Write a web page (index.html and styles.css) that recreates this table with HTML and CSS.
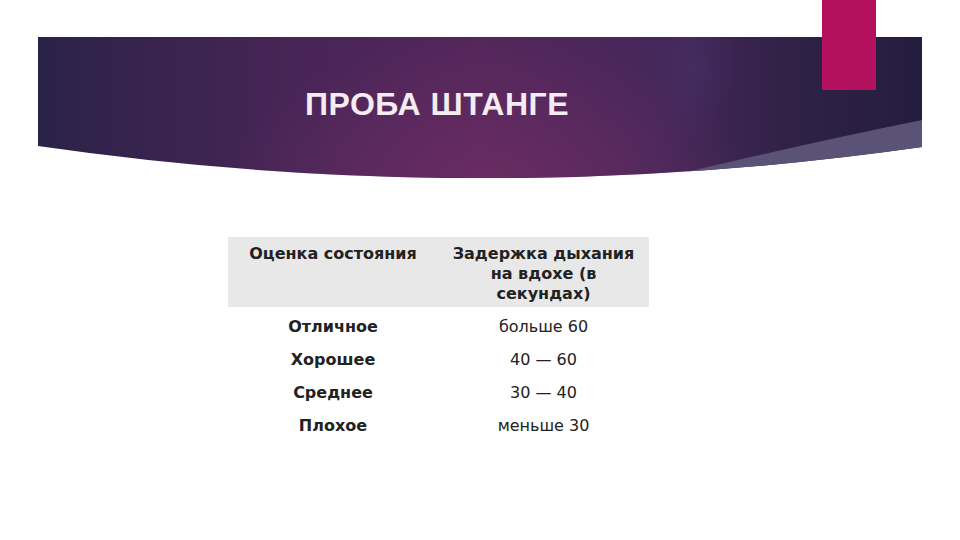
FILE: index.html
```html
<!DOCTYPE html>
<html lang="ru">
<head>
<meta charset="utf-8">
<title>Проба Штанге</title>
<link rel="stylesheet" href="styles.css">
</head>
<body>
<div class="slide">
  <div class="banner">
    <svg class="banner-bg" width="884" height="141" viewBox="0 0 884 141" xmlns="http://www.w3.org/2000/svg">
      <defs>
        <linearGradient id="lg" x1="0" y1="0" x2="1" y2="0">
          <stop offset="0" stop-color="#2b2248"/>
          <stop offset="0.28" stop-color="#472556"/>
          <stop offset="0.5" stop-color="#53265b"/>
          <stop offset="0.7" stop-color="#462759"/>
          <stop offset="0.86" stop-color="#2f2147"/>
          <stop offset="1" stop-color="#241d3f"/>
        </linearGradient>
        <radialGradient id="rg" cx="450" cy="150" r="260" gradientUnits="userSpaceOnUse" gradientTransform="translate(450 150) scale(1 0.6) translate(-450 -150)">
          <stop offset="0" stop-color="#6e2d64" stop-opacity="0.85"/>
          <stop offset="1" stop-color="#6e2d64" stop-opacity="0"/>
        </radialGradient>
        <radialGradient id="spot" cx="655" cy="30" r="60" gradientUnits="userSpaceOnUse" gradientTransform="translate(655 30) scale(0.7 1.2) translate(-655 -30)">
          <stop offset="0" stop-color="#4a3470" stop-opacity="0.45"/>
          <stop offset="1" stop-color="#4a3470" stop-opacity="0"/>
        </radialGradient>
        <clipPath id="clip">
          <path d="M0,0 H884 V110 Q442,173 0,109 Z"/>
        </clipPath>
      </defs>
      <g clip-path="url(#clip)">
        <rect width="884" height="141" fill="url(#lg)"/>
        <rect width="884" height="141" fill="url(#rg)"/>
        <rect width="884" height="141" fill="url(#spot)"/>
        <path d="M884,83 Q770,106 640,137 L640,160 L884,160 Z" fill="#5a5277"/>
      </g>
    </svg>
    <h1 class="title">ПРОБА ШТАНГЕ</h1>
  </div>
  <div class="table">
    <div class="cell head">Оценка состояния</div>
    <div class="cell head">Задержка дыхания на вдохе (в секундах)</div>
    <div class="body">
      <div class="cell name">Отличное</div>
      <div class="cell val">больше 60</div>
      <div class="cell name">Хорошее</div>
      <div class="cell val">40 — 60</div>
      <div class="cell name">Среднее</div>
      <div class="cell val">30 — 40</div>
      <div class="cell name">Плохое</div>
      <div class="cell val">меньше 30</div>
    </div>
  </div>
  <div class="pink-bar"></div>
</div>
</body>
</html>
```
FILE: styles.css
```css
html, body {
  margin: 0;
  padding: 0;
  background: #ffffff;
}
.slide {
  position: relative;
  width: 960px;
  height: 540px;
  overflow: hidden;
  background: #ffffff;
  display: flex;
  flex-direction: column;
}
.banner {
  position: relative;
  margin: 37px 0 0 38px;
  width: 884px;
  height: 141px;
}
.banner-bg {
  position: absolute;
  left: 0;
  top: 0;
  display: block;
}
.title {
  position: relative;
  margin: 0;
  padding: 51px 0 0 267px;
  font-family: "Liberation Sans", Arial, sans-serif;
  font-weight: bold;
  font-size: 32px;
  line-height: 32px;
  color: #f3ecf2;
  letter-spacing: 0.5px;
}
.table {
  margin: 59px 0 0 228px;
  width: 421px;
  display: grid;
  grid-template-columns: 210px 211px;
  font-family: "DejaVu Sans", Verdana, sans-serif;
  font-size: 16px;
  color: #222222;
}
.head {
  background: #e8e8e8;
  font-weight: bold;
  text-align: center;
  line-height: 20px;
  padding: 7px 8px 3px;
  height: 60px;
}
.body {
  grid-column: 1 / 3;
  display: grid;
  grid-template-columns: 210px 211px;
  grid-auto-rows: 33px;
  padding-top: 3px;
}
.cell {
  text-align: center;
}
.name {
  font-weight: bold;
  line-height: 33px;
}
.val {
  line-height: 33px;
}
.pink-bar {
  position: absolute;
  left: 822px;
  top: 0;
  width: 54px;
  height: 90px;
  background: #b3105e;
}
```
